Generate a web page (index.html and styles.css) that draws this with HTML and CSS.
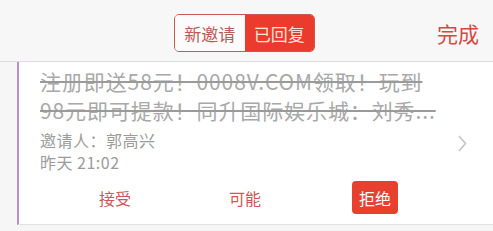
FILE: index.html
```html
<!DOCTYPE html>
<html lang="zh">
<head>
<meta charset="utf-8">
<link rel="stylesheet" href="styles.css">
</head>
<body>
<header class="bar">
  <div class="bar-side"></div>
  <div class="seg">
    <span class="seg-item">新邀请</span>
    <span class="seg-item seg-active">已回复</span>
  </div>
  <div class="bar-side bar-right"><span class="done">完成</span></div>
</header>
<section class="card">
  <div class="card-body">
    <p class="title">注册即送58元！0008V.COM领取！玩到<br>98元即可提款！同升国际娱乐城：刘秀...</p>
    <p class="meta meta-first">邀请人：郭高兴</p>
    <p class="meta">昨天 21:02</p>
    <div class="actions">
      <span class="act">接受</span>
      <span class="act">可能</span>
      <span class="act"><span class="act-on">拒绝</span></span>
    </div>
  </div>
  <div class="chev">
    <svg width="9" height="17" viewBox="0 0 9 17"><path d="M1 1 L7.5 8.5 L1 16" fill="none" stroke="#c4c4c8" stroke-width="1.6"/></svg>
  </div>
</section>
</body>
</html>
```

FILE: styles.css
```css
html, body { margin: 0; padding: 0; }
body {
  width: 493px;
  height: 231px;
  overflow: hidden;
  background: #f6f6f6;
  font-family: "Noto Sans CJK SC", "Noto Sans", sans-serif;
}
p { margin: 0; }
.bar {
  display: grid;
  grid-template-columns: 1fr auto 1fr;
  align-items: start;
  height: 62px;
  box-sizing: border-box;
  padding-top: 14px;
  background: #f7f7f7;
  border-bottom: 1px solid #dcdcdc;
}
.bar-right { display: flex; justify-content: flex-end; padding-right: 14px; }
.done {
  color: #d44a43;
  font-size: 21px;
  line-height: 38px;
}
.seg {
  display: flex;
  width: 141px;
  height: 38px;
  box-sizing: border-box;
  border: 1.5px solid #c95852;
  border-radius: 5px;
  overflow: hidden;
  margin-left: -4px;
}
.seg-item {
  flex: 1;
  display: flex;
  align-items: center;
  justify-content: center;
  font-size: 17px;
  color: #bc5a55;
  background: #fbfbfb;
}
.seg-active { background: #ea3b2c; color: #fbe3df; }
.card {
  display: flex;
  align-items: center;
  margin-left: 17px;
  background: #ffffff;
  border-left: 2px solid #b892cc;
  border-bottom: 1px solid #e2e2e2;
}
.card-body {
  flex: 1;
  padding: 5px 0 10px 21px;
}
.title {
  font-size: 21px;
  line-height: 29px;
  letter-spacing: 0.9px;
  color: #a9a9a9;
  text-decoration: line-through;
  text-decoration-color: #9a9a9a;
  white-space: nowrap;
}
.meta {
  font-size: 16px;
  line-height: 22px;
  color: #9b9b9b;
  letter-spacing: 0.5px;
}
.meta-first { margin-top: 4px; }
.actions {
  display: grid;
  grid-template-columns: repeat(3, 130px);
  margin: 8px 0 0 10px;
}
.act {
  display: flex;
  justify-content: center;
  align-items: center;
  height: 33px;
  font-size: 16px;
  color: #cf5556;
}
.act-on {
  display: flex;
  align-items: center;
  justify-content: center;
  width: 46px;
  height: 33px;
  border-radius: 4px;
  background: #e8402e;
  color: #ffffff;
}
.chev {
  padding: 0 26px 0 0;
  display: flex;
}
```
